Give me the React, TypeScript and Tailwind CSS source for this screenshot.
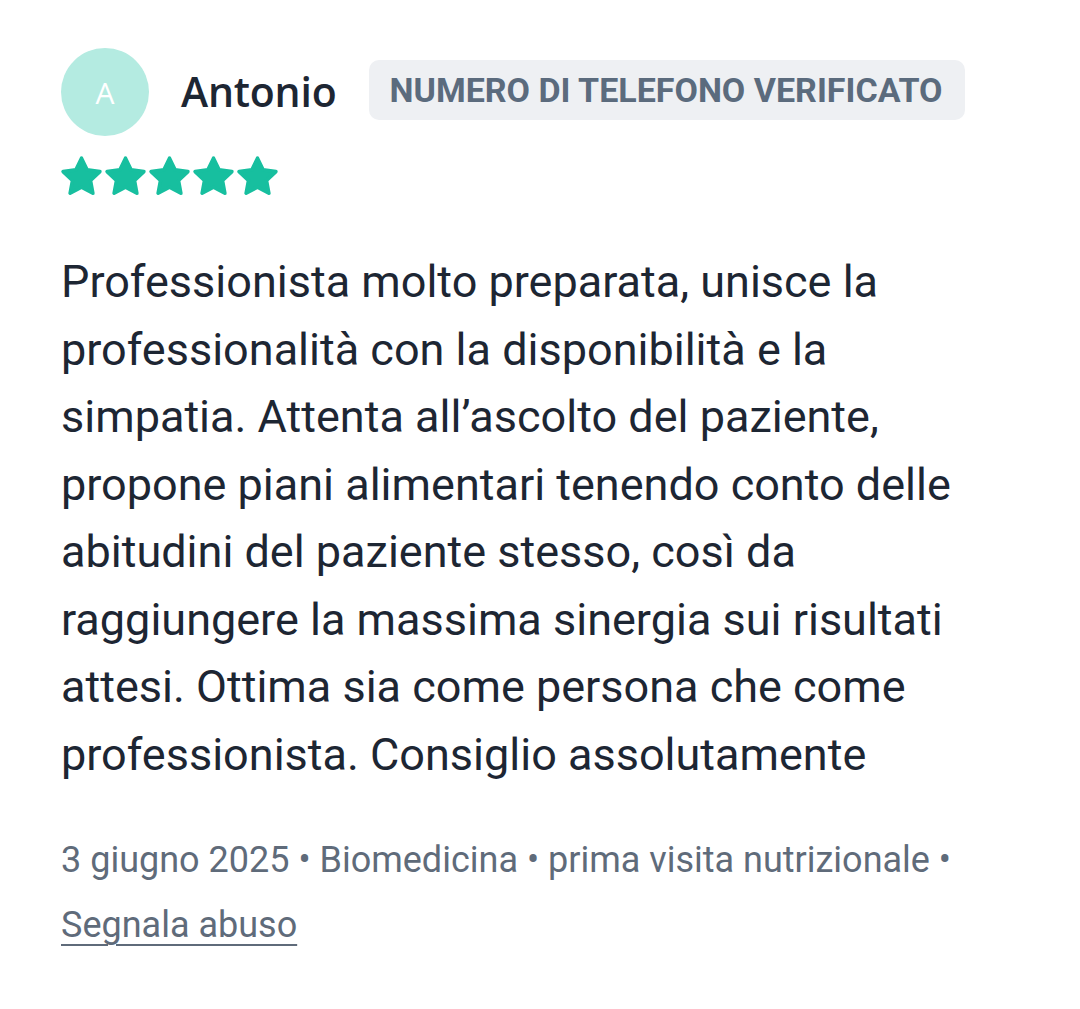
import React from "react";

const Star = () => (
  <svg viewBox="0 0 24 24" className="w-[43px] h-[43px]" fill="#17bf9f">
    <path d="M12 1.8L15.12 8.31L22.27 9.26L17.04 14.24L18.35 21.34L12 17.9L5.65 21.34L6.96 14.24L1.73 9.26L8.88 8.31Z" stroke="#17bf9f" strokeWidth="2" strokeLinejoin="round" />
  </svg>
);

export default function App() {
  const text =
    "Professionista molto preparata, unisce la professionalità con la disponibilità e la simpatia. Attenta all’ascolto del paziente, propone piani alimentari tenendo conto delle abitudini del paziente stesso, così da raggiungere la massima sinergia sui risultati attesi. Ottima sia come persona che come professionista. Consiglio assolutamente";
  return (
    <div className="w-[1080px] h-[1009px] bg-white pl-[61px] pt-[48px]" style={{ fontFamily: "Roboto, sans-serif" }}>
      <div className="flex items-center">
        <div className="w-[88px] h-[88px] rounded-full bg-[#b4ebe1] flex items-center justify-center text-white text-[30px]" style={{ fontFamily: "'Open Sans', sans-serif" }}>
          A
        </div>
        <div className="ml-[32px] text-[41px] font-semibold text-[#1d2633] tracking-[-0.2px]" style={{ fontFamily: "'Open Sans', sans-serif" }}>
          Antonio
        </div>
        <div className="ml-[32px] h-[60px] w-[596px] pl-[21px] rounded-[10px] bg-[#eef0f3] flex items-center text-[34px] font-bold text-[#5b6b7d] mb-[4px] whitespace-nowrap">
          NUMERO DI TELEFONO VERIFICATO
        </div>
      </div>
      <div className="flex gap-[1px] mt-[19px] -ml-[1px]">
        <Star />
        <Star />
        <Star />
        <Star />
        <Star />
      </div>
      <p className="mt-[50px] w-[920px] text-[45px] leading-[67.5px] text-[#1d2633]">{text}</p>
      <div className="mt-[40px] w-[920px] text-[36px] leading-[65px] text-[#5f6b7a]">
        3 giugno 2025 • Biomedicina • prima visita nutrizionale •{" "}
        <span className="underline underline-offset-[7px] decoration-[2px]">Segnala abuso</span>
      </div>
    </div>
  );
}
